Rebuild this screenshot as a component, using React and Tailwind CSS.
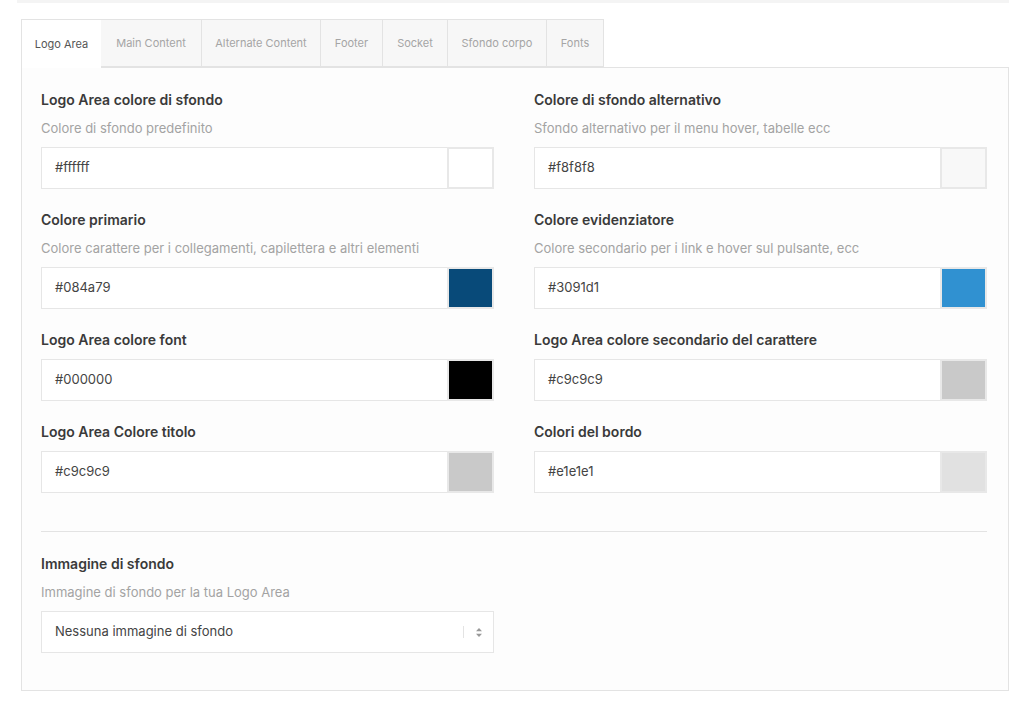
import React from "react";

const tabs = ["Logo Area", "Main Content", "Alternate Content", "Footer", "Socket", "Sfondo corpo", "Fonts"];

const fields = [
  [
    { label: "Logo Area colore di sfondo", desc: "Colore di sfondo predefinito", value: "#ffffff" },
    { label: "Colore di sfondo alternativo", desc: "Sfondo alternativo per il menu hover, tabelle ecc", value: "#f8f8f8" },
  ],
  [
    { label: "Colore primario", desc: "Colore carattere per i collegamenti, capilettera e altri elementi", value: "#084a79" },
    { label: "Colore evidenziatore", desc: "Colore secondario per i link e hover sul pulsante, ecc", value: "#3091d1" },
  ],
  [
    { label: "Logo Area colore font", value: "#000000" },
    { label: "Logo Area colore secondario del carattere", value: "#c9c9c9" },
  ],
  [
    { label: "Logo Area Colore titolo", value: "#c9c9c9" },
    { label: "Colori del bordo", value: "#e1e1e1" },
  ],
];

const ColorField = ({ label, desc, value }) => (
  <div className="flex flex-col">
    <div className={"text-[14px] leading-5 font-semibold text-[#3a3a3a] " + (desc ? "mb-[8px]" : "mb-[9px]")}>{label}</div>
    {desc && <div className="text-[13px] leading-5 text-[#a3a3a3] mb-[9px]">{desc}</div>}
    <div className="flex h-[42px] border border-[#e6e6e6] bg-white">
      <div className="flex-1 flex items-center pl-[13px] text-[13px] text-[#444]">{value}</div>
      <div className="w-[47px] bg-[#e8e8e8] p-[2px] -my-px -mr-px h-[42px]">
        <div className="w-full h-full" style={{ backgroundColor: value }} />
      </div>
    </div>
  </div>
);

export default function App() {
  return (
    <div className="w-[1030px] h-[702px] bg-white" style={{ fontFamily: "Inter, 'Liberation Sans', sans-serif" }}>
      <div className="ml-[17px] w-[992px] h-[3px] bg-[#f4f4f4]" />
      <div className="ml-[21px] mt-[16px] w-[988px]">
        {/* Tabs */}
        <div className="flex h-[48px]">
          {tabs.map((t, i) => (
            <div
              key={t}
              className={
                i === 0
                  ? "flex items-center justify-center pt-px w-[80px] border-l border-t border-[#e3e3e3] bg-white text-[11px] text-[#555] relative z-10 -mb-px"
                  : "flex items-center justify-center pt-px border-t border-r border-b border-[#e3e3e3] bg-[#f7f7f7] text-[11px] text-[#a5a5a5] " +
                    ["", "w-[101px]", "w-[119px]", "w-[62px]", "w-[65px]", "w-[99px]", "w-[57px]"][i]
              }
            >
              {t}
            </div>
          ))}
        </div>
        {/* Panel */}
        <div className="border border-[#e3e3e3] bg-[#fdfdfd] pl-[19px] pr-[21px] pt-[22px] h-[624px]">
          <div className="flex flex-col gap-[21px]">
            {fields.map((row, ri) => (
              <div key={ri} className="grid grid-cols-2 gap-x-[40px]">
                {row.map((f) => (
                  <ColorField key={f.label} {...f} />
                ))}
              </div>
            ))}
          </div>
          <div className="mt-[38px] mb-[22px] h-px bg-[#e3e3e3]" />
          <div className="w-[453px] flex flex-col">
            <div className="text-[14px] leading-5 font-semibold text-[#3a3a3a] mb-[8px]">Immagine di sfondo</div>
            <div className="text-[13px] leading-5 text-[#a3a3a3] mb-[9px]">Immagine di sfondo per la tua Logo Area</div>
            <div className="flex items-center h-[42px] border border-[#e6e6e6] bg-white">
              <div className="flex-1 pl-[13px] text-[13px] text-[#444]">Nessuna immagine di sfondo</div>
              <div className="w-px h-[12px] bg-[#e3e3e3]" />
              <div className="w-[29px] flex justify-center">
                <svg width="6" height="9" viewBox="0 0 6 9">
                  <path d="M3 0 L6 3.3 H0 Z" fill="#999" />
                  <path d="M3 9 L6 5.7 H0 Z" fill="#999" />
                </svg>
              </div>
            </div>
          </div>
        </div>
      </div>
    </div>
  );
}
